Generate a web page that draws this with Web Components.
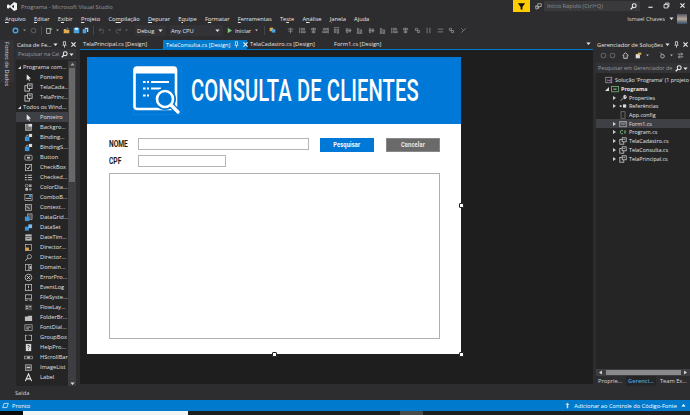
<!DOCTYPE html>
<html lang="pt-BR"><head><meta charset="utf-8"><title>Programa - Microsoft Visual Studio</title>
<style>html,body{margin:0;padding:0;background:#2d2d30;overflow:hidden}body{font:5.7px "Open Sans","Noto Sans",sans-serif;color:#e0e0e0}</style>
</head><body>
<vs-app></vs-app>
<script>
const G='#c8c8c8',D='#6e6e70',B='#4aa3e0';
const icons={
 pointer:`<path d="M3 1.5v6.5l1.6-1.4 1 2.4 1-.5-1-2.3h2.2z" fill="#e8e8e8"/>`,
 form:`<rect x="1" y="3" width="5" height="6" fill="none" stroke="${G}"/><rect x="4" y="1" width="5" height="5" fill="#252526" stroke="${G}"/><path d="M5.5 3h2" stroke="${G}"/>`,
 comp:`<rect x="1.5" y="1.5" width="7" height="7" fill="#777" stroke="${G}" stroke-width=".6"/><rect x="5" y="1" width="4" height="3" fill="#ddd"/>`,
 bind:`<rect x="1" y="4" width="5" height="5" fill="#3b93d8"/><rect x="5.5" y="1" width="3.5" height="3.5" fill="#d8d8d8"/><path d="M3 4V2.5h2" stroke="#ddd" fill="none" stroke-width=".7"/>`,
 button:`<rect x="1" y="2.5" width="8" height="5.4" rx="1" fill="none" stroke="${G}" stroke-width=".8"/><rect x="3.3" y="4.2" width="3.4" height="2" fill="${G}"/>`,
 check:`<rect x="1.5" y="1.5" width="7" height="7" fill="none" stroke="${G}" stroke-width=".8"/><path d="M3 5l1.5 1.7L7 3" stroke="#eee" fill="none" stroke-width=".9"/>`,
 list:`<path d="M1 2.5h2M1 5h2M1 7.5h2" stroke="${G}" stroke-width="1.2"/><path d="M4.2 2.5H9M4.2 5H9M4.2 7.5H9" stroke="${G}"/>`,
 color:`<circle cx="3" cy="3" r="1.6" fill="none" stroke="${G}" stroke-width=".7"/><rect x="5.5" y="1.5" width="3" height="3" fill="#9a9a9a"/><rect x="1.5" y="5.5" width="3" height="3" fill="#bbb"/><circle cx="7" cy="7" r="1.5" fill="#888"/>`,
 combo:`<rect x="1" y="1.5" width="8" height="7" fill="none" stroke="${G}" stroke-width=".7"/><rect x="5.5" y="2" width="3" height="2.5" fill="#3b93d8"/><path d="M2 6h6" stroke="${G}"/>`,
 ctx:`<rect x="1.5" y="1.5" width="7" height="7" fill="#444" stroke="${G}" stroke-width=".7"/><path d="M3 3.5l3 3" stroke="#ddd"/>`,
 grid:`<rect x="4" y="1" width="5" height="6" fill="#555" stroke="${G}" stroke-width=".6"/><rect x="1" y="4" width="5" height="5" fill="#3b93d8"/>`,
 ds:`<rect x="1" y="4" width="4.5" height="4.5" fill="#3b93d8"/><rect x="4.8" y="1.5" width="4.2" height="4.2" fill="#7cbcec"/>`,
 date:`<rect x="1.5" y="1.5" width="7" height="7" fill="#bbb"/><path d="M1.5 4h7M3 6h4" stroke="#333" stroke-width=".8"/>`,
 folder:`<rect x="1.5" y="1.5" width="7" height="7" fill="none" stroke="${G}" stroke-width=".7"/><path d="M1.5 5h4v3.5h-4z" fill="#d9a548"/>`,
 mag:`<circle cx="6" cy="4" r="2.3" fill="none" stroke="${G}" stroke-width=".8"/><path d="M4.3 5.8L1.5 8.5" stroke="${G}"/>`,
 domain:`<rect x="1.5" y="1.5" width="7" height="7" fill="none" stroke="${G}" stroke-width=".7"/><path d="M5.5 1.5v7" stroke="${G}"/><path d="M6.5 3.5h1.5v3H6.5z" fill="${G}"/>`,
 err:`<circle cx="5" cy="5" r="3.7" fill="none" stroke="${G}" stroke-width=".9"/><path d="M3.5 3.5l3 3m0-3l-3 3" stroke="#eee"/>`,
 ev:`<rect x="1.5" y="1.5" width="7" height="7" fill="none" stroke="${G}" stroke-width=".8"/><path d="M5 3v2.5M5 6.5v.8" stroke="${G}"/>`,
 file:`<rect x="1.5" y="2" width="7" height="4.5" fill="none" stroke="${G}" stroke-width=".8"/><path d="M1 8h3M6 8h3" stroke="${G}"/>`,
 flow:`<rect x="1" y="2" width="8" height="6" fill="#555"/><path d="M2.5 4h1.5M6 4h1.5M2.5 6h1.5" stroke="#eee"/>`,
 fbr:`<path d="M1 4h3l1-1h4v6H1z" fill="#c0c0c0"/>`,
 font:`<rect x="1" y="2" width="8" height="6.5" fill="none" stroke="${G}" stroke-width=".7"/><path d="M2.5 4.5h5M2.5 6.5h3" stroke="${G}"/>`,
 group:`<rect x="1.5" y="2.5" width="7" height="6" fill="none" stroke="${G}" stroke-width=".8"/><path d="M3 2.5h3" stroke="#252526"/>`,
 help:`<rect x="2" y="1" width="6" height="8" fill="#d8d8d8"/><path d="M4 3.5a1 1 0 1 1 1.5 1L5 5.5M5 6.5v1" stroke="#222" fill="none" stroke-width=".8"/>`,
 hs:`<rect x=".5" y="3.5" width="9" height="3" fill="none" stroke="${G}" stroke-width=".6"/><rect x="3.5" y="4" width="3" height="2" fill="${G}"/>`,
 img:`<rect x="1.5" y="2" width="7" height="6.5" fill="#555" stroke="${G}" stroke-width=".6"/><path d="M3 5h4" stroke="#ddd"/>`,
 A:`<path d="M1.5 9L5 1l3.500 8M3 6.500h4" fill="none" stroke="#eee" stroke-width="1.2"/>`,
 wrench:`<path d="M2 8.500L6 4.500M5.500 3a2 2 0 0 1 3-1L7 3.500l.8.8L9 3a2 2 0 0 1-3 2.500" stroke="#ddd" fill="#ddd" stroke-width=".9"/>`,
 refs:`<rect x="1" y="4" width="2.200" height="2.200" fill="#ddd"/><rect x="5" y="3" width="4" height="4" fill="#ddd"/>`,
 cfg:`<rect x="2.500" y="1" width="5" height="8" fill="none" stroke="#999" stroke-width=".7"/>`,
 formcs:`<rect x="1" y="2" width="8" height="6.500" fill="none" stroke="${G}" stroke-width=".8"/><path d="M1 3.800h8M3 5.500h4" stroke="${G}" stroke-width=".7"/>`,
 cs:`<path d="M5 3.300A2.200 2.200 0 1 0 5 7" fill="none" stroke="#7ec97e" stroke-width="1"/><path d="M6 4h3M6 6h3M7 3v4M8 3v4" stroke="#7ec97e" stroke-width=".5"/>`,
 sol:`<rect x="1" y="1.500" width="7.500" height="7" fill="#222" stroke="${G}" stroke-width=".7"/><path d="M3 4l2 1.500L3 7zM5 5.500l2-2v4z" fill="#b180d7"/>`,
 proj:`<rect x=".8" y="2" width="8.400" height="6.500" fill="none" stroke="#7ec97e" stroke-width=".9"/><path d="M3 5.200h4" stroke="#ddd"/>`
};
const ic=(n,s=9)=>`<svg width="${s}" height="${s}" viewBox="0 0 10 10" style="display:block;flex:none">${icons[n]||''}</svg>`;
const small=d=>`<svg width="7" height="7" viewBox="0 0 10 10" style="display:block;flex:none">${d}</svg>`;
const arrow=small(`<path d="M2 3.500h6L5 7z" fill="#e8e8e8"/>`);
const pin=small(`<path d="M3.500 1h3v4l1 1H2.500l1-1zM5 6v3.500" fill="none" stroke="#e8e8e8" stroke-width="1.100"/>`);
const close=small(`<path d="M2 2l6 6M8 2l-6 6" stroke="#f0f0f0" stroke-width="1.500"/>`);
const loupe=small(`<circle cx="6" cy="4" r="2.800" fill="none" stroke="#f0f0f0" stroke-width="1.500"/><path d="M4 6L1 9" stroke="#f0f0f0" stroke-width="1.800"/>`);
function def(name,css,html){customElements.define(name,class extends HTMLElement{connectedCallback(){if(this.shadowRoot)return;const r=this.attachShadow({mode:'open'});r.innerHTML=`<style>${css}</style>`+(typeof html==='function'?html(this):html);}});}

def('vs-titlebar',`:host{display:flex;height:13px;align-items:stretch;box-sizing:border-box}
.logo{margin:2px 4px 0 7px}.t{color:#9a9a9a;align-self:center;margin-top:1px;white-space:nowrap}
.f{margin-left:auto;width:17px;height:12px;background:#ffcc00;display:flex;align-items:center;justify-content:center}
.fb{margin:3px 2px 0 5px}.q{width:96px;height:10px;margin-top:1px;background:#3a3a3d;box-sizing:border-box;padding:0 3px;display:flex;align-items:center;justify-content:space-between;color:#8e8e90}
.w{display:flex;width:50px;justify-content:space-around;padding:2px 0 0 3px;box-sizing:border-box}`,
`<svg class="logo" width="10" height="9" viewBox="0 0 10 9"><path d="M7 0l3 1.300v6.400L7 9 3 5.300 1.300 6.700 0 6V3l1.300-.7L3 3.700zM7 2.700L4.600 4.500 7 6.300z" fill="#f2f2f2"/></svg>
<span class="t">Programa - Microsoft Visual Studio</span>
<div class="f"><svg width="9" height="9" viewBox="0 0 10 10"><path d="M1 1.500h8L6 5.500V9L4 8V5.500z" fill="#111"/></svg></div>
<div class="fb">${small(`<path d="M4 1h5v4H7L6 6V5H4zM1 4h2v2h2v2H3L2 9V8H1z" fill="none" stroke="#ddd" stroke-width=".9"/>`)}</div>
<div class="q"><span>Início Rápido (Ctrl+Q)</span>${loupe}</div>
<div class="w">${small(`<path d="M2 7.500h6" stroke="#eee" stroke-width="1.600"/>`)}${small(`<path d="M1.500 3.500h5.500V8.500H1.500zM3.500 3V1.500H8.500V6.500H7.200" fill="none" stroke="#eee" stroke-width="1.200"/>`)}${close}</div>`);

def('vs-menubar',`:host{display:flex;height:11px;align-items:center;padding-left:5px;gap:8.300px;color:#e8e8e8;position:relative;white-space:nowrap}
u{text-decoration-thickness:.5px;text-underline-offset:1px}.u{margin-left:auto;color:#d8d8d8;display:flex;align-items:center;gap:0;padding-right:3px}
.a{width:10px;height:10px;margin-left:2px;background:linear-gradient(#556,#b6a79a 50%,#2f4a66)}.u svg{margin-left:3px}`,
`<span><u>A</u>rquivo</span><span><u>E</u>ditar</span><span>E<u>x</u>ibir</span><span><u>P</u>rojeto</span><span>Co<u>m</u>pilação</span><span><u>D</u>epurar</span><span>E<u>q</u>uipe</span><span>F<u>o</u>rmatar</span><span><u>F</u>erramentas</span><span>Te<u>s</u>te</span><span>A<u>n</u>álise</span><span><u>J</u>anela</span><span>A<u>j</u>uda</span>
<div class="u"><span>Ismael Chaves</span>${arrow}<div class="a"></div></div>`);

def('vs-combo',`:host{display:flex;align-items:center;justify-content:space-between;height:11px;background:#333337;padding:0 2px;box-sizing:border-box;color:#e6e6e6;flex:none}`,
`<slot></slot>${arrow}`);

const tb=(n,w)=>`<i style="display:block;flex:none;width:${w}px"></i>`;
const sep=`<b style="display:block;flex:none;width:1px;height:9px;background:#46464a;margin:0 4px"></b>`;
const gr=d=>small(`<path d="${d}" fill="none" stroke="#88888c" stroke-width="1.200"/>`);
const al=[`M1 1v8M3 2h5v2H3zM3 6h6v2H3z`,`M5 1v8M2 2h6v2H2zM3 6h4v2H3z`,`M9 1v8M2 2h6v2H2zM1 6h7v2H1z`,`M1 1h8M2 3h2v5H2zM6 3h2v6H6z`,`M1 5h8M2 2h2v6H2zM6 3h2v4H6z`,`M1 9h8M2 2h2v6H2zM6 4h2v4H6z`];
const grp=[`M5 1v8M1 3h8M2 6h6`,...al,al[4],al[5],al[0],al[1],`M2 2h3v3H2zM5 5h3v3H5z`,`M3 1v8M7 1v8`,`M1 3h8M1 7h8`,`M2 2h3v3H2zM5 5h3v3H5z`,`M2 8l6-6M2 2l2 2`].map(d=>gr(d)).join('');
def('vs-toolbar',`:host{display:flex;height:13px;align-items:center;padding-left:12px;color:#e6e6e6;white-space:nowrap}.g{display:flex;gap:4.500px;align-items:center;flex:none}`,
`${small(`<circle cx="5" cy="5" r="3.300" fill="none" stroke="#4aa3e0" stroke-width="2"/>`)}${tb(0,2)}${small(`<path d="M3 3.500h4L5 6z" fill="#999"/>`)}${tb(0,2)}${small(`<circle cx="5" cy="5" r="3.300" fill="none" stroke="#555" stroke-width="1.600"/>`)}
${sep}${small(`<rect x="1" y="2" width="5" height="7" fill="none" stroke="#ddd"/><path d="M7 1v4M5 3h4" stroke="#7ec97e"/>`)}${tb(0,1)}${small(`<path d="M3 3.500h4L5 6z" fill="#bbb"/>`)}${tb(0,2)}
${small(`<path d="M1 3h3l1 1h4v5H1z" fill="#e0b050"/><path d="M6 3V1M6 1l2 2" stroke="#4aa3e0"/>`)}${tb(0,3)}${small(`<path d="M1 1h7l1 1v7H1z" fill="#4aa3e0"/><rect x="3" y="1" width="4" height="3" fill="#e6f2fb"/>`)}${tb(0,2)}${small(`<path d="M1 3h5v6H1z" fill="#4aa3e0"/><path d="M4 1h5v6H7V3H4z" fill="#a9d3f2"/>`)}
${sep}${small(`<path d="M2 2v3h3M2.500 5A3 3 0 1 1 5 9" fill="none" stroke="#5f5f63" stroke-width="1.200"/>`)}${tb(0,1)}${small(`<path d="M3 3.500h4L5 6z" fill="#666"/>`)}${tb(0,2)}${small(`<path d="M8 2v3H5M7.500 5A3 3 0 1 0 5 9" fill="none" stroke="#5f5f63" stroke-width="1.200"/>`)}${tb(0,1)}${small(`<path d="M3 3.500h4L5 6z" fill="#666"/>`)}
${tb(0,5)}<vs-combo style="width:31px">Debug</vs-combo>${tb(0,3)}<vs-combo style="width:54px">Any CPU</vs-combo>${tb(0,3)}
${small(`<path d="M2.500 1l6 4-6 4z" fill="#7ec97e"/>`)}${tb(0,2)}<span>Iniciar</span>${tb(0,2)}${small(`<path d="M3 3.500h4L5 6z" fill="#ccc"/>`)}${sep}${small(`<rect x="1" y="1" width="5" height="5" fill="#e0b050"/><rect x="4" y="3" width="5" height="5" fill="#4aa3e0"/>`)}${tb(0,11)}
<div class="g">${grp}</div>`);

def('vs-doc-tab',`:host{display:flex;align-items:center;height:8px;white-space:nowrap;padding:0 2px 0 3px;gap:3px;color:#e4e4e4;flex:none;box-sizing:border-box}
:host([active]){background:#007acc;color:#fff;width:84px;justify-content:space-between;height:9px;padding-right:1px}.e{display:flex;gap:2px}`,
el=>`<slot></slot>${el.hasAttribute('active')?`<span class="e">${pin}${close}</span>`:''}`);

def('vs-doc-tabs',`:host{display:flex;height:9px;align-items:flex-start;position:relative}`,
`<vs-doc-tab style="width:83px">TelaPrincipal.cs [Design]</vs-doc-tab><vs-doc-tab active>TelaConsulta.cs [Design]</vs-doc-tab><vs-doc-tab style="width:84px">TelaCadastro.cs [Design]</vs-doc-tab><vs-doc-tab>Form1.cs [Design]</vs-doc-tab><span style="margin-left:auto;padding:0 1px">${arrow}</span>`);

def('cs-button',`:host{display:flex;align-items:center;justify-content:center;width:54px;height:14px;font:700 6.600px "Roboto",sans-serif;letter-spacing:.2px;color:#fff;background:#0078d7;box-sizing:border-box}
:host([gray]){background:#6a6a6a;border:1px solid #888;color:#e8e8e8}span{display:inline-block;transform:scaleX(.86)}`,`<span><slot></slot></span>`);
def('cs-input',`:host{display:block;height:12px;box-sizing:border-box;border:1px solid #b5b5b5;background:#fff;flex:none}`,'');
def('cs-label',`:host{display:block;width:29px;flex:none;font:700 9px "Roboto",sans-serif;color:#1a1a1a;line-height:12px}span{display:inline-block;transform:scaleX(.74);transform-origin:left}`,`<span><slot></slot></span>`);

def('cs-header',`:host{display:flex;height:67px;background:#0078d7;align-items:center;padding-left:46px;box-sizing:border-box;overflow:hidden}
.i{margin-right:9px;flex:none;margin-top:-1px}.t{display:inline-block;font:500 30.500px "Roboto",sans-serif;color:#fff;letter-spacing:.2px;white-space:nowrap;transform:scaleX(.66);transform-origin:left;margin-top:-1px}`,
`<svg class="i" width="49" height="49" viewBox="0 0 49 49">
<rect x=".5" y=".5" width="48" height="48" fill="none" stroke="#3b97e6" stroke-width=".5" stroke-dasharray="1 1"/>
<rect x="1.500" y="1.500" width="41.500" height="41.500" rx="2.500" fill="none" stroke="#fff" stroke-width="2.600"/>
<rect x="2" y="2" width="40.500" height="5.500" fill="#fff"/>
<g fill="#fff"><rect x="10" y="15" width="2.600" height="2"/><rect x="14" y="15" width="2" height="2"/><rect x="18" y="15" width="18" height="2"/>
<rect x="10" y="21.500" width="2.600" height="2"/><rect x="14" y="21.500" width="2" height="2"/><rect x="18" y="21.500" width="10" height="2"/>
<rect x="10" y="28.500" width="2.600" height="2"/><rect x="14" y="28.500" width="2" height="2"/></g>
<circle cx="32" cy="33" r="11" fill="#0078d7"/>
<path d="M38.500 39.500l7 7" stroke="#0078d7" stroke-width="6"/>
<circle cx="32" cy="33" r="8" fill="none" stroke="#fff" stroke-width="2.600"/>
<path d="M38 39l7 7" stroke="#fff" stroke-width="3.400" stroke-linecap="round"/></svg>
<span class="t">CONSULTA DE CLIENTES</span>`);

const hd=(x,y)=>`<span class="h" style="left:${x}px;top:${y}px"></span>`;
def('cs-form',`:host{display:block;position:relative;width:374px;height:297px;background:#fff;flex:none}
.b{padding:14px 21px 0 22px;display:flex;flex-direction:column}.r{display:flex}.r1{height:14px;margin-bottom:3px}.r1 cs-button{margin-left:12px}.r1 cs-button:first-of-type{margin-left:11px}
.box{height:166px;box-sizing:border-box;border:1px solid #b0b0b0;margin-top:6px;background:#fff}
.h{position:absolute;width:3px;height:3px;background:#fff;border:1px solid #222;border-radius:1px;box-sizing:content-box;margin:-2.500px}`,
`<cs-header></cs-header><div class="b">
<div class="r r1"><cs-label>NOME</cs-label><cs-input style="width:171px"></cs-input><cs-button>Pesquisar</cs-button><cs-button gray>Cancelar</cs-button></div>
<div class="r"><cs-label>CPF</cs-label><cs-input style="width:88px"></cs-input></div>
<div class="box"></div></div>${hd(374.5,148.5)}${hd(374.5,297.5)}${hd(187.5,297.5)}`);

def('vs-designer',`:host{display:block;height:335px;background:#1e1e1e;padding:7px 0 0 7px;box-sizing:border-box;border-top:1px solid #007acc}`,`<cs-form></cs-form>`);

def('vs-search',`:host{display:flex;align-items:center;height:10px;background:#333337;padding:0 1px 0 2px;color:#9a9a9a;box-sizing:border-box;white-space:nowrap;overflow:hidden;font-size:5.400px}
span{flex:1;overflow:hidden}.e{display:flex;flex:none}`,`<span><slot></slot></span><div class="e">${loupe}${arrow}</div>`);

def('vs-panel-title',`:host{display:flex;align-items:center;height:9px;color:#e4e4e4;padding:0 1px;white-space:nowrap}span{flex:1}.e{display:flex;gap:2px}`,
`<span><slot></slot></span><div class="e">${arrow}${pin}${close}</div>`);

def('vs-tool',`:host{display:flex;align-items:center;height:10px;padding-left:8px;gap:7px;color:#e0e0e0;white-space:nowrap;box-sizing:border-box;flex:none}
:host([sel]){background:#3f3f46}:host([head]){padding-left:2px;gap:1px}.tri{width:0;height:0;border-right:3px solid #ddd;border-top:3px solid transparent;margin-right:1px}`,
el=>el.hasAttribute('head')?`<div class="tri"></div><slot></slot>`:`${ic(el.getAttribute('icon'))}<slot></slot>`);

const items=[['pointer','Ponteiro'],['form','TelaCada...'],['form','TelaPrinc...']];
const all=[['pointer','Ponteiro',1],['comp','Backgro...'],['bind','Binding...'],['bind','BindingS...'],['button','Button'],['check','CheckBox'],['list','Checked...'],['color','ColorDia...'],['combo','ComboB...'],['ctx','Context...'],['grid','DataGrid...'],['ds','DataSet'],['date','DateTim...'],['folder','Director...'],['mag','Director...'],['domain','Domain...'],['err','ErrorPro...'],['ev','EventLog'],['file','FileSyste...'],['flow','FlowLay...'],['fbr','FolderBr...'],['font','FontDial...'],['group','GroupBox'],['help','HelpPro...'],['hs','HScrollBar'],['img','ImageList'],['A','Label']];
const row=a=>`<vs-tool icon="${a[0]}" ${a[2]?'sel':''}>${a[1]}</vs-tool>`;
def('vs-toolbox',`:host{display:flex;flex-direction:column;width:60px;flex:none;background:#252526;height:346px;overflow:hidden}
.h{background:#2d2d30;padding:0 0 1px}.m{display:flex;flex:1;min-height:0;padding-top:1px}.l{flex:1;display:flex;flex-direction:column;overflow:hidden;min-width:0;padding-top:1px}
.s{width:8px;background:#3e3e42;flex:none;display:flex;flex-direction:column;align-items:center}.th{width:6px;height:114px;background:#686868;margin-top:1px}.ar{height:6px;display:flex;align-items:center}.sp{flex:1}`,
`<div class="h"><vs-panel-title>Caixa de Fe...</vs-panel-title><vs-search>Pesquisar na Cai</vs-search></div>
<div class="m"><div class="l"><vs-tool head>Programa com...</vs-tool>${items.map(row).join('')}<vs-tool head>Todos os Wind...</vs-tool>${all.map(row).join('')}</div>
<div class="s"><div class="ar">${small(`<path d="M2 6.500h6L5 3z" fill="#aaa"/>`)}</div><div class="th"></div><div class="sp"></div><div class="ar">${small(`<path d="M2 3.500h6L5 7z" fill="#ddd"/>`)}</div></div></div>`);

def('vs-node',`:host{display:flex;align-items:center;height:8.700px;gap:2px;white-space:nowrap;color:#e4e4e4;box-sizing:border-box;flex:none;font-size:5.400px}
:host([sel]){background:#3f3f46}.x{width:5px;flex:none;display:flex;justify-content:center}
.o{width:0;height:0;border-left:3px solid #ccc;border-top:2.500px solid transparent;border-bottom:2.500px solid transparent}
.d{width:0;height:0;border-right:4px solid #ddd;border-top:4px solid transparent}`,
el=>{const e=el.getAttribute('exp');const l=+el.getAttribute('lv');return `<i style="display:block;flex:none;width:${l}px"></i><div class="x">${e==='o'?'<div class="o"></div>':e==='d'?'<div class="d"></div>':''}</div>${ic(el.getAttribute('icon'),8)}<span style="font-weight:${el.hasAttribute('b')?700:400}"><slot></slot></span>`});

def('vs-solution',`:host{display:flex;flex-direction:column;width:94px;flex:none;background:#252526;height:346px;overflow:hidden;position:relative}
.h{background:#2d2d30}.tbr{display:flex;align-items:center;height:12px;padding-left:4px;gap:2px}.t{flex:1;padding-top:3px;display:flex;flex-direction:column;overflow:hidden;min-height:0}
.sc{height:7px;background:#3e3e42;display:flex;align-items:center;gap:1px;padding:0 1px;flex:none}.sc b{flex:1;height:5px;background:#8a8a8a;display:block;margin:0 0 0 1px}
.tabs{display:flex;height:10px;background:#2d2d30;gap:4px;padding-left:2px;align-items:center;white-space:nowrap;flex:none}.tabs .on{color:#4aa3e0;background:#252526;padding:0 2px;font-weight:600;height:10px;line-height:10px}.tabs span{color:#d8d8d8}
vs-search{margin:2px 0 0 0}`,
`<div class="h"><vs-panel-title>Gerenciador de Soluções</vs-panel-title>
<div class="tbr">${small(`<circle cx="5" cy="5" r="3.300" fill="none" stroke="#5f5f63" stroke-width="1.500"/>`)}${small(`<circle cx="5" cy="5" r="3.300" fill="none" stroke="#5f5f63" stroke-width="1.500"/>`)}${tb(0,2)}${small(`<path d="M1 5l4-4 4 4M2.500 4.500V9h5V4.500" fill="none" stroke="#ddd" stroke-width="1.200"/>`)}${tb(0,2)}${small(`<rect x="1" y="3" width="6" height="6" fill="#ddd"/><rect x="4" y="1" width="5" height="3" fill="#e0b050"/>`)}${small(`<path d="M3 3.500h4L5 6z" fill="#bbb"/>`)}${tb(0,4)}${small(`<circle cx="5" cy="6" r="2.600" fill="none" stroke="#ccc" stroke-width="1.100"/><path d="M2 1l2 2" stroke="#ccc"/>`)}${small(`<path d="M3 3.500h4L5 6z" fill="#bbb"/>`)}${small(`<path d="M1 3h7M6 1l2 2-2 2M9 7H2M4 5L2 7l2 2" fill="none" stroke="#ccc"/>`)}</div>
<vs-search>Pesquisar em Gerenciador de</vs-search></div>
<div class="t"><vs-node lv="0" icon="sol">Solução 'Programa' (1 projeto</vs-node>
<vs-node lv="6" exp="d" icon="proj" b>Programa</vs-node>
<vs-node lv="14" exp="o" icon="wrench">Properties</vs-node><vs-node lv="14" exp="o" icon="refs">Referências</vs-node><vs-node lv="14" icon="cfg">App.config</vs-node>
<vs-node lv="14" exp="o" icon="formcs" sel>Form1.cs</vs-node><vs-node lv="14" exp="o" icon="cs">Program.cs</vs-node>
<vs-node lv="14" exp="o" icon="form">TelaCadastro.cs</vs-node><vs-node lv="14" exp="o" icon="form">TelaConsulta.cs</vs-node><vs-node lv="14" exp="o" icon="form">TelaPrincipal.cs</vs-node></div>
<div class="sc">${small(`<path d="M7 2v6L3 5z" fill="#ddd"/>`)}<b></b>${small(`<path d="M3 2v6l4-3z" fill="#ddd"/>`)}</div>
<div class="tabs"><span>Proprie...</span><span class="on">Gerenci...</span><span>Team Ex...</span></div>`);

def('vs-rail',`:host{display:block;width:14px;flex:none;height:42px;background:#333337;writing-mode:vertical-rl;white-space:nowrap;color:#d8d8d8;padding:2px 4px 0 4px;box-sizing:border-box;line-height:6px}`,`<slot></slot>`);
def('vs-status',`:host{display:flex;height:11px;background:#007acc;color:#fff;align-items:center;padding:0 3px 0 2px;gap:3px;white-space:nowrap}.sp{flex:1}`,
`${small(`<path d="M3 2h6L7 8H1z" fill="none" stroke="#fff" stroke-width="1"/>`)}<span>Pronto</span><span class="sp"></span>${small(`<path d="M5 1l3 3H6v5H4V4H2z" fill="#e8dcc0"/>`)}<span>Adicionar ao Controle do Código-Fonte</span>${small(`<path d="M2 6.500h6L5 3z" fill="#fff"/>`)}`);
def('vs-strip',`:host{display:flex;height:4px;background:#1e1e1e}i{display:block;height:4px;flex:none}`,
`<i style="width:23px;background:#0c0c0c"></i><i style="width:165px;background:#f4f4f4"></i><i style="width:212px"></i><i style="width:23px;background:#4a4a4a"></i>`);
def('vs-app',`:host{display:flex;flex-direction:column;width:690px;height:415px;background:#2d2d30;overflow:hidden}
.main{display:flex;margin-top:3px;height:346px;flex:none}.mid{width:513px;flex:none;margin:0 3px 0 4px;display:flex;flex-direction:column}.gap{width:2px;flex:none}
.out{height:14px;padding-left:15px;display:flex;align-items:center;color:#d8d8d8;flex:none}`,
`<vs-titlebar></vs-titlebar><vs-menubar></vs-menubar><vs-toolbar></vs-toolbar>
<div class="main"><vs-rail>Fontes de Dados</vs-rail><div class="gap"></div><vs-toolbox></vs-toolbox><div class="mid"><vs-doc-tabs></vs-doc-tabs><vs-designer></vs-designer></div><vs-solution></vs-solution></div>
<div class="out">Saída</div><vs-status></vs-status><vs-strip></vs-strip>`);
</script>
</body></html>
